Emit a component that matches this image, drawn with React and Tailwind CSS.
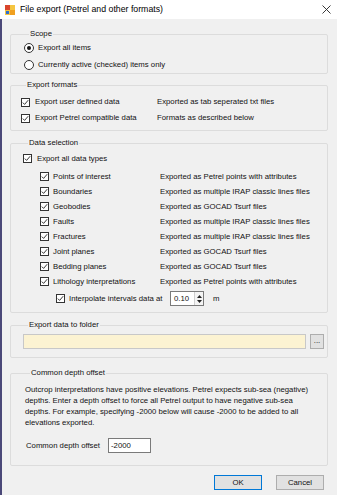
import React from 'react';

const Check = () => (
    <span className="w-[9px] h-[9px] shrink-0 border border-[#333] bg-white flex items-center justify-center">
        <svg width="7" height="7" viewBox="0 0 7 7">
            <path d="M0.8 3.6 L2.6 5.4 L6.2 1.2" fill="none" stroke="#222" strokeWidth="0.9" />
        </svg>
    </span>
);

const Radio = ({ checked }) => (
    <span className="w-[10px] h-[10px] shrink-0 rounded-full border border-[#333] bg-white flex items-center justify-center">
        {checked && <span className="w-[4px] h-[4px] rounded-full bg-[#111]" />}
    </span>
);

const Group = ({ title, className, children }) => (
    <fieldset className={`border border-[#dcdcdc] rounded-[2px] ${className}`}>
        <legend className="ml-[5px] px-[1px] leading-[10px]">{title}</legend>
        {children}
    </fieldset>
);

const dataTypes = [
    ['Points of interest', 'Exported as Petrel points with attributes'],
    ['Boundaries', 'Exported as multiple IRAP classic lines files'],
    ['Geobodies', 'Exported as GOCAD Tsurf files'],
    ['Faults', 'Exported as multiple IRAP classic lines files'],
    ['Fractures', 'Exported as multiple IRAP classic lines files'],
    ['Joint planes', 'Exported as GOCAD Tsurf files'],
    ['Bedding planes', 'Exported as GOCAD Tsurf files'],
    ['Lithology interpretations', 'Exported as Petrel points with attributes'],
];

const offsetText = [
    'Outcrop interpretations have positive elevations. Petrel expects sub-sea (negative)',
    'depths. Enter a depth offset to force all Petrel output to have negative sub-sea',
    'depths. For example, specifying -2000 below will cause -2000 to be added to all',
    'elevations exported.',
];

const App = () => {
    return (
        <div className="w-[337px] h-[495px] bg-[#f0f0f0] flex flex-col overflow-hidden font-['Liberation_Sans',Arial,sans-serif] text-[7.75px] text-[#111]">
            {/* title bar */}
            <div className="h-[19px] bg-white flex items-center pl-[5px] pr-[6px] shrink-0">
                <svg width="10" height="10" viewBox="0 0 10 10">
                    <rect x="0" y="0" width="10" height="10" fill="#f5c542" />
                    <rect x="0" y="0" width="5" height="5" fill="#d9452b" />
                    <rect x="5" y="5" width="5" height="5" fill="#f0a020" />
                    <rect x="1" y="6" width="3" height="3" fill="#2d6fd1" />
                </svg>
                <span className="ml-[5px] text-[8.75px] text-black">File export (Petrel and other formats)</span>
                <svg className="ml-auto" width="9" height="9" viewBox="0 0 9 9">
                    <path d="M0.5 0.5 L8.5 8.5 M8.5 0.5 L0.5 8.5" stroke="#222" strokeWidth="0.9" />
                </svg>
            </div>

            <div className="flex-1 border-l-2 border-[#4a4878] pl-[8px] pr-[9px] pt-[10px] flex flex-col">
                <Group title="Scope" className="pl-[13px]">
                    <div className="flex items-center h-[17px]">
                        <Radio checked />
                        <span className="ml-[4px]">Export all items</span>
                    </div>
                    <div className="flex items-center h-[17px]">
                        <Radio />
                        <span className="ml-[4px]">Currently active (checked) items only</span>
                    </div>
                </Group>

                <Group title="Export formats" className="mt-[6px] pl-[10px] pt-[4px] pb-[4px]">
                    <div className="flex items-center h-[16px]">
                        <Check />
                        <span className="ml-[5px] w-[122px]">Export user defined data</span>
                        <span>Exported as tab seperated txt files</span>
                    </div>
                    <div className="flex items-center h-[16px]">
                        <Check />
                        <span className="ml-[5px] w-[122px]">Export Petrel compatible data</span>
                        <span>Formats as described below</span>
                    </div>
                </Group>

                <Group title="Data selection" className="mt-[7px] pl-[12px] pt-[3px] pb-[4px]">
                    <div className="flex items-center h-[15px]">
                        <Check />
                        <span className="ml-[5px]">Export all data types</span>
                    </div>
                    <div className="mt-[3px] ml-[17px]">
                        {dataTypes.map(([name, desc]) => (
                            <div key={name} className="flex items-center h-[15px]">
                                <Check />
                                <span className="ml-[4px] w-[107px]">{name}</span>
                                <span>{desc}</span>
                            </div>
                        ))}
                        <div className="flex items-center h-[19px] ml-[16px]">
                            <Check />
                            <span className="ml-[4px] w-[101px]">Interpolate intervals data at</span>
                            <div className="w-[34px] h-[15px] border border-[#7a7a7a] bg-white flex">
                                <span className="flex-1 pl-[3px] leading-[13px]">0.10</span>
                                <div className="w-[9px] border-l border-[#cfcfcf] bg-[#f4f4f4] flex flex-col items-center justify-center gap-[2px]">
                                    <svg width="5" height="3" viewBox="0 0 5 3">
                                        <path d="M0 3 L2.5 0 L5 3 Z" fill="#222" />
                                    </svg>
                                    <svg width="5" height="3" viewBox="0 0 5 3">
                                        <path d="M0 0 L2.5 3 L5 0 Z" fill="#222" />
                                    </svg>
                                </div>
                            </div>
                            <span className="ml-[9px]">m</span>
                        </div>
                    </div>
                </Group>

                <Group title="Export data to folder" className="mt-[7px] pl-[12px] pr-[3px] pt-[4px] pb-[8px]">
                    <div className="flex items-center gap-[4px] h-[15px]">
                        <div className="w-[283px] h-[15px] border border-[#c8c8c8] bg-[#fcf3d2]" />
                        <div className="w-[14px] h-[15px] border border-[#adadad] bg-[#e1e1e1] flex items-center justify-center leading-none pb-[2px]">
                            ...
                        </div>
                    </div>
                </Group>

                <Group title="Common depth offset" className="mt-[10px] pl-[14px] pt-[6px] pb-[12px]">
                    <div className="flex flex-col">
                        {offsetText.map(line => (
                            <div key={line} className="h-[11px] leading-[11px] whitespace-nowrap">
                                {line}
                            </div>
                        ))}
                    </div>
                    <div className="mt-[10px] flex items-center h-[15px]">
                        <span className="ml-[1px] w-[82px]">Common depth offset</span>
                        <div className="w-[43px] h-[15px] border border-[#7a7a7a] bg-white pl-[2px] leading-[13px]">
                            -2000
                        </div>
                    </div>
                </Group>

                <div className="mt-[9px] flex justify-end gap-[14px] pr-[4px]">
                    <button className="w-[48px] h-[15px] border border-[#0078d7] bg-[#e1e1e1] leading-[13px]">
                        OK
                    </button>
                    <button className="w-[48px] h-[15px] border border-[#adadad] bg-[#e1e1e1] leading-[13px]">
                        Cancel
                    </button>
                </div>
            </div>
        </div>
    );
};

export default App;
